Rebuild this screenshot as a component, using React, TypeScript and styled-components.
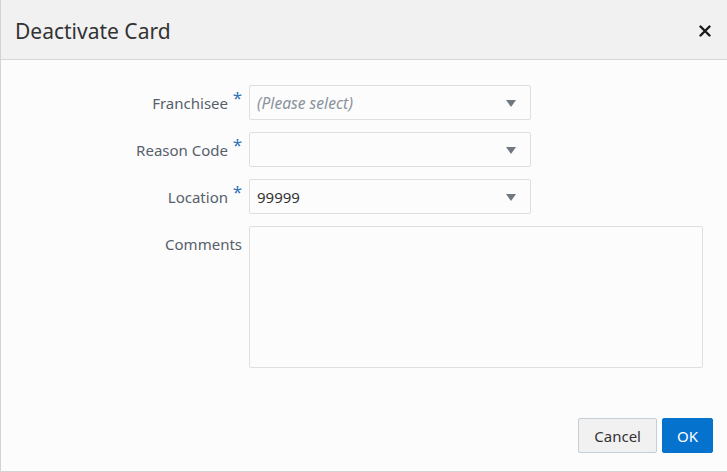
import styled, { createGlobalStyle } from "styled-components";

const Global = createGlobalStyle`
  html, body {
    margin: 0;
    padding: 0;
    background: #fcfcfc;
    font-family: "Noto Sans", "Open Sans", sans-serif;
  }
`;

export const Dialog = styled.div`
  box-sizing: border-box;
  width: 727px;
  height: 472px;
  display: flex;
  flex-direction: column;
  background: #fcfcfc;
  border-left: 1px solid #d3d3d3;
  border-bottom: 1px solid #d3d3d3;
`;

export const Header = styled.div`
  box-sizing: border-box;
  height: 60px;
  flex: none;
  display: flex;
  align-items: center;
  justify-content: space-between;
  padding: 2px 12px 0 14px;
  background: #f1f1f1;
  border-bottom: 1px solid #d6d6d6;
`;

export const Title = styled.h1`
  margin: 0;
  font-size: 21px;
  font-weight: 400;
  color: #333333;
`;

export const CloseButton = styled.button`
  width: 20px;
  height: 20px;
  padding: 0;
  border: 0;
  background: none;
  display: flex;
  align-items: center;
  justify-content: center;
`;

export const Body = styled.div`
  flex: 1;
  padding: 25px 24px 0 0;
`;

export const Form = styled.div`
  display: grid;
  grid-template-columns: 241px 1fr;
  grid-auto-rows: min-content;
  column-gap: 7px;
  row-gap: 12px;
`;

export const Label = styled.label`
  display: flex;
  justify-content: flex-end;
  height: 35px;
  font-size: 15px;
  line-height: 37px;
  color: #56606b;
`;

export const Required = styled.span`
  width: 14px;
  text-align: right;
  color: #2f73b8;
  font-size: 17px;
  line-height: 25px;
`;

export const Select = styled.div`
  box-sizing: border-box;
  width: 282px;
  height: 35px;
  display: flex;
  align-items: center;
  justify-content: space-between;
  padding: 1px 14px 0 7px;
  background: #fcfcfc;
  border: 1px solid #dfdfdf;
  border-radius: 2px;
  font-size: 15px;
  color: #333333;
`;

export const Placeholder = styled.span`
  font-style: italic;
  font-size: 15.6px;
  color: #8a939c;
`;

export const Arrow = styled.span`
  width: 0;
  height: 0;
  border-left: 5px solid transparent;
  border-right: 5px solid transparent;
  border-top: 7px solid #6f7780;
`;

export const TextArea = styled.div`
  box-sizing: border-box;
  width: 454px;
  height: 142px;
  background: #fcfcfc;
  border: 1px solid #dfdfdf;
  border-radius: 2px;
`;

export const Footer = styled.div`
  display: flex;
  justify-content: flex-end;
  gap: 5px;
  padding: 0 14px 18px 0;
`;

export const Button = styled.button<{ $primary?: boolean }>`
  box-sizing: border-box;
  height: 35px;
  padding: 0 ${(p) => (p.$primary ? "14px" : "15px")};
  font-family: "Noto Sans", "Open Sans", sans-serif;
  font-size: 15px;
  border-radius: 2px;
  border: 1px solid ${(p) => (p.$primary ? "#0572ce" : "#c4ced7")};
  background: ${(p) => (p.$primary ? "#0572ce" : "#f1f1f1")};
  color: ${(p) => (p.$primary ? "#ffffff" : "#333333")};
`;

const fields = [
  { label: "Franchisee", value: "", placeholder: "(Please select)" },
  { label: "Reason Code", value: "" },
  { label: "Location", value: "99999" },
];

export default function App() {
  return (
    <>
      <Global />
      <Dialog>
        <Header>
          <Title>Deactivate Card</Title>
          <CloseButton aria-label="Close">
            <svg width="12" height="12" viewBox="0 0 12 12">
              <path d="M1.5 1.5 L10.5 10.5 M10.5 1.5 L1.5 10.5" stroke="#1a1a1a" strokeWidth="2.4" strokeLinecap="round" />
            </svg>
          </CloseButton>
        </Header>
        <Body>
          <Form>
            {fields.map((f) => (
              <>
                <Label key={f.label + "l"}>
                  {f.label}
                  <Required>*</Required>
                </Label>
                <Select key={f.label + "s"}>
                  {f.placeholder ? <Placeholder>{f.placeholder}</Placeholder> : <span>{f.value}</span>}
                  <Arrow />
                </Select>
              </>
            ))}
            <Label>Comments</Label>
            <TextArea />
          </Form>
        </Body>
        <Footer>
          <Button>Cancel</Button>
          <Button $primary>OK</Button>
        </Footer>
      </Dialog>
    </>
  );
}
